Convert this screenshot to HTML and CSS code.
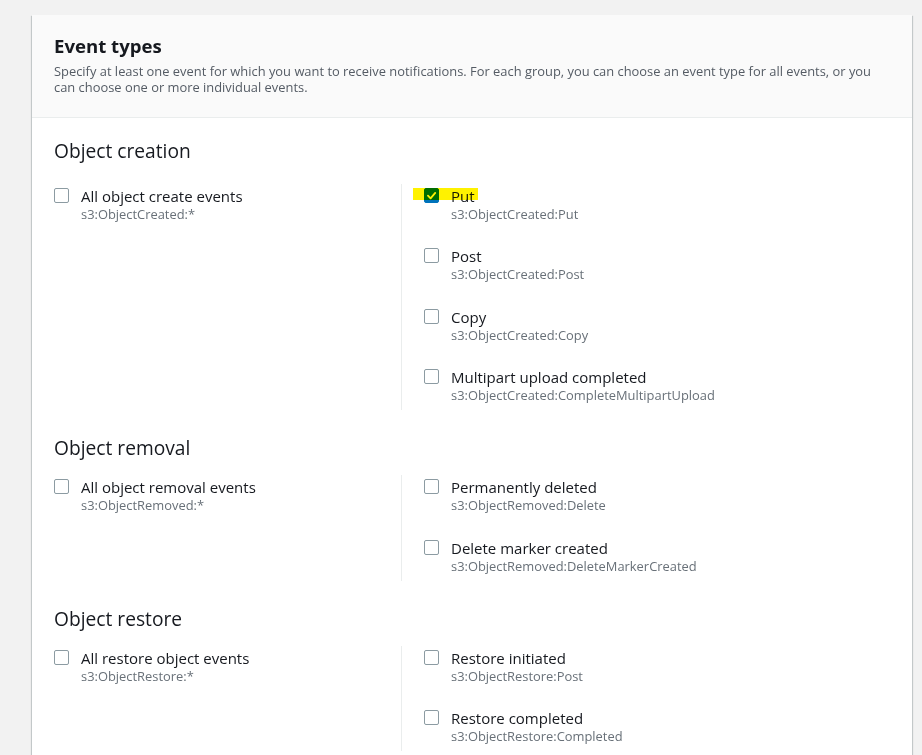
FILE: index.html
```html
<!DOCTYPE html>
<html lang="en">
<head>
<meta charset="utf-8">
<title>Event types</title>
<link rel="stylesheet" href="styles.css">
</head>
<body>
<div class="page">
  <div class="card">
    <div class="card-header">
      <h2 class="title">Event types</h2>
      <p class="desc">Specify at least one event for which you want to receive notifications. For each group, you can choose an event type for all events, or you can choose one or more individual events.</p>
    </div>
    <div class="card-body">
      <section class="group">
        <h3 class="group-title">Object creation</h3>
        <div class="cols">
          <div class="col col-left">
            <label class="item"><span class="box"></span><span class="text"><span class="label">All object create events</span><span class="sub">s3:ObjectCreated:*</span></span></label>
          </div>
          <div class="col col-right">
            <label class="item"><span class="box checked"><svg viewBox="0 0 14 14" width="14" height="14"><path d="M3.2 7.2 L6 10 L11 4.2" fill="none" stroke="#fff" stroke-width="2" stroke-linecap="round" stroke-linejoin="round"/></svg></span><span class="text"><span class="label">Put</span><span class="sub">s3:ObjectCreated:Put</span></span><span class="highlight"></span></label>
            <label class="item"><span class="box"></span><span class="text"><span class="label">Post</span><span class="sub">s3:ObjectCreated:Post</span></span></label>
            <label class="item"><span class="box"></span><span class="text"><span class="label">Copy</span><span class="sub">s3:ObjectCreated:Copy</span></span></label>
            <label class="item"><span class="box"></span><span class="text"><span class="label">Multipart upload completed</span><span class="sub">s3:ObjectCreated:CompleteMultipartUpload</span></span></label>
          </div>
        </div>
      </section>
      <section class="group">
        <h3 class="group-title">Object removal</h3>
        <div class="cols">
          <div class="col col-left">
            <label class="item"><span class="box"></span><span class="text"><span class="label">All object removal events</span><span class="sub">s3:ObjectRemoved:*</span></span></label>
          </div>
          <div class="col col-right">
            <label class="item"><span class="box"></span><span class="text"><span class="label">Permanently deleted</span><span class="sub">s3:ObjectRemoved:Delete</span></span></label>
            <label class="item"><span class="box"></span><span class="text"><span class="label">Delete marker created</span><span class="sub">s3:ObjectRemoved:DeleteMarkerCreated</span></span></label>
          </div>
        </div>
      </section>
      <section class="group">
        <h3 class="group-title">Object restore</h3>
        <div class="cols">
          <div class="col col-left">
            <label class="item"><span class="box"></span><span class="text"><span class="label">All restore object events</span><span class="sub">s3:ObjectRestore:*</span></span></label>
          </div>
          <div class="col col-right">
            <label class="item"><span class="box"></span><span class="text"><span class="label">Restore initiated</span><span class="sub">s3:ObjectRestore:Post</span></span></label>
            <label class="item"><span class="box"></span><span class="text"><span class="label">Restore completed</span><span class="sub">s3:ObjectRestore:Completed</span></span></label>
          </div>
        </div>
      </section>
    </div>
  </div>
</div>
</body>
</html>
```
FILE: styles.css
```css
html, body {
  margin: 0;
  padding: 0;
  height: 755px;
  overflow: hidden;
}
body {
  background: #f2f2f2;
  font-family: "Open Sans", "Noto Sans", "Liberation Sans", sans-serif;
  color: #16191f;
}
.page {
  padding: 15px 10px 0 32px;
}
.card {
  background: #ffffff;
  box-shadow: 0 1px 1px 0 rgba(0, 28, 36, 0.3), 1px 1px 1px 0 rgba(0, 28, 36, 0.15), -1px 1px 1px 0 rgba(0, 28, 36, 0.15);
  min-height: 900px;
}
.card-header {
  background: #fafafa;
  border-bottom: 1px solid #eaeded;
  padding: 20px 22px 22px;
}
.title {
  margin: 0;
  font-size: 18.6px;
  line-height: 22px;
  font-weight: 700;
  color: #16191f;
}
.desc {
  margin: 6px 0 0;
  font-size: 12.9px;
  line-height: 16px;
  color: #545b64;
}
.card-body {
  padding: 22px 22px 0;
}
.group + .group {
  margin-top: 27px;
}
.group-title {
  margin: 0 0 16.5px;
  font-size: 19.2px;
  line-height: 22px;
  font-weight: 400;
  color: #16191f;
}
.group:first-child .group-title {
  margin-bottom: 22px;
}
.cols {
  display: grid;
  grid-template-columns: 347px 1fr;
}
.col {
  display: flex;
  flex-direction: column;
  gap: 24.3px;
  padding: 3px 0 6px;
}
.col-right {
  border-left: 1px solid #eaeded;
  padding-left: 22px;
}
.item {
  position: relative;
  display: flex;
  align-items: flex-start;
  gap: 13px;
}
.box {
  position: relative;
  z-index: 0;
  flex: none;
  box-sizing: border-box;
  width: 15px;
  height: 15px;
  margin-top: 1px;
  margin-right: -1px;
  border: 1px solid #8c9ba2;
  border-radius: 2px;
  background: #fff;
}
.box.checked {
  border-color: #0073bb;
  background: #0073bb;
}
.box svg {
  position: absolute;
  left: 0;
  top: 0;
  width: 13px;
  height: 13px;
}
.text {
  display: flex;
  flex-direction: column;
}
.label {
  font-size: 15px;
  line-height: 18px;
  color: #16191f;
}
.sub {
  font-size: 12.9px;
  line-height: 18px;
  color: #687078;
}
.highlight {
  position: absolute;
  left: -11px;
  top: 1px;
  width: 65px;
  height: 12px;
  background: #fff200;
  mix-blend-mode: multiply;
  pointer-events: none;
}
```
